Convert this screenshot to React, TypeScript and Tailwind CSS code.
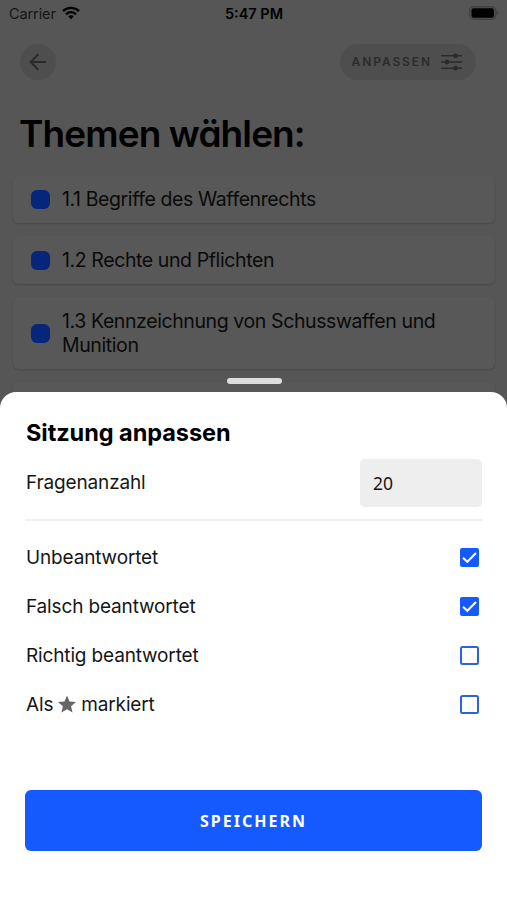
import { ReactNode } from 'react';

type TopicCardProps = {
  title: string;
};

type OptionRowProps = {
  label: ReactNode;
  checked?: boolean;
};

const StatusBar = () => (
  <div className="grid h-7 grid-cols-3 items-center pr-2 pl-[9px] text-[14.5px] text-[#151515]">
    <div className="flex items-center gap-[6px]">
      <span className="tracking-[-0.1px]">Carrier</span>
      <svg className="-mt-[2px]" width="18" height="14" viewBox="0 0 18 14" fill="none" stroke="#000" strokeWidth="2.4">
        <path d="M1 5.2C5.4 0.7 12.6 0.7 17 5.2" />
        <path d="M4 8.3C6.9 5.6 11.1 5.6 14 8.3" />
        <path d="M6.2 10.2C7.7 8.8 10.3 8.8 11.8 10.2L9 13.2Z" fill="#000" stroke="none" />
      </svg>
    </div>
    <span className="text-center font-semibold whitespace-nowrap text-black">5:47 PM</span>
    <svg className="-mt-[2px] justify-self-end" width="30" height="14" viewBox="0 0 30 14">
      <rect x="0.8" y="0.8" width="26" height="12.4" rx="4" fill="none" stroke="#404040" strokeWidth="1.4" />
      <rect x="2.5" y="2.2" width="22.5" height="9.6" rx="2" fill="#000" />
      <path d="M28.2 5v4c1.6-.6 1.6-3.4 0-4Z" fill="#404040" />
    </svg>
  </div>
);

const TopicCard = ({ title }: TopicCardProps) => (
  <div className="flex items-center gap-3 rounded-md bg-[#585858] px-[18px] py-[12px] shadow-[0_1px_2px_rgba(0,0,0,0.16)]">
    <span className="size-[19px] shrink-0 rounded-md bg-[#06267c]" />
    <span className="text-[19.5px] leading-6 tracking-[-0.4px] text-[#0a0a0a]">{title}</span>
  </div>
);

const Checkbox = ({ checked }: { checked?: boolean }) => (
  <svg width="19" height="19" viewBox="0 0 19 19" fill="none">
    {checked ? (
      <>
        <rect width="19" height="19" rx="2" fill="#145aff" />
        <path d="M3 9.7L7.3 13.8L16 5" stroke="#fff" strokeWidth="2" />
      </>
    ) : (
      <rect x="1" y="1" width="17" height="17" rx="1.5" stroke="#2b64e3" strokeWidth="2" />
    )}
  </svg>
);

const OptionRow = ({ label, checked }: OptionRowProps) => (
  <div className="flex h-[49px] items-center justify-between pr-[3px]">
    <span className="flex items-center pt-[2px] pl-px">{label}</span>
    <Checkbox checked={checked} />
  </div>
);

const Star = () => (
  <svg className="mx-[5px] -mt-[4px]" width="18" height="18" viewBox="2 2 20 19" fill="#666">
    <path d="M12 17.27 18.18 21l-1.64-7.03L22 9.24l-7.19-.61L12 2 9.19 8.63 2 9.24l5.46 4.73L5.82 21z" />
  </svg>
);

export default function App() {
  const topics = [
    '1.1 Begriffe des Waffenrechts',
    '1.2 Rechte und Pflichten',
    '1.3 Kennzeichnung von Schusswaffen und Munition',
    '1.4 Erlaubnisse',
  ];

  const options: OptionRowProps[] = [
    { label: 'Unbeantwortet', checked: true },
    { label: 'Falsch beantwortet', checked: true },
    { label: 'Richtig beantwortet' },
    {
      label: (
        <>
          Als
          <Star />
          markiert
        </>
      ),
    },
  ];

  return (
    <div className="relative h-[900px] w-[507px] overflow-hidden bg-[#565656] font-['Inter',sans-serif]">
      <StatusBar />
      <div className="flex items-center justify-between pt-4 pr-[31px] pl-5">
        <button className="flex size-9 items-center justify-center rounded-full bg-[#4e4e4e] pr-px">
          <svg width="18" height="18" viewBox="0 0 18 18" fill="none" stroke="#292929" strokeWidth="2">
            <path d="M17 9H2M9.3 1.3L1.6 9L9.3 16.7" />
          </svg>
        </button>
        <button className="flex h-9 items-center rounded-full bg-[#4e4e4e] pr-[14px] pl-3 text-[#2b2b2b]">
          <span className="text-[12px] font-semibold tracking-[1.9px]">ANPASSEN</span>
          <svg className="ml-[9px]" width="21" height="18" viewBox="0 0 21 18" fill="#2b2b2b" stroke="#2b2b2b" strokeWidth="1.4">
            <path d="M0 2.8H21M0 9H21M0 15.2H21" />
            <circle cx="14.5" cy="2.8" r="1.7" />
            <circle cx="6" cy="9" r="1.7" />
            <circle cx="14.5" cy="15.2" r="1.7" />
          </svg>
        </button>
      </div>
      <h1 className="mt-[29px] pl-[19px] text-[37px] leading-[50px] font-semibold tracking-[-0.9px] whitespace-nowrap text-black [font-feature-settings:'cv11']">
        Themen wählen:
      </h1>
      <div className="mt-4 flex flex-col gap-[13px] pr-3 pl-[13px]">
        {topics.map((topic) => (
          <TopicCard key={topic} title={topic} />
        ))}
      </div>

      <div className="absolute inset-x-0 bottom-0 h-[508px] rounded-t-[16px] bg-white px-[25px] text-[19px] tracking-[-0.15px] text-[#161616]">
        <span className="absolute -top-[14px] left-[227px] h-[6px] w-[55px] rounded-full bg-[#dedede]" />
        <h2 className="pt-[26px] pl-px text-[23.5px] leading-[30px] font-bold tracking-[-0.05px] text-black">
          Sitzung anpassen
        </h2>
        <div className="mt-[11px] flex items-center justify-between border-b-2 border-[#eee] pb-3">
          <span className="pt-px pl-px">Fragenanzahl</span>
          <span className="flex h-12 w-[122px] items-center rounded-[5px] bg-[#eee] pl-[13px] font-['Noto_Sans',sans-serif] text-[17.5px] tracking-normal">
            20
          </span>
        </div>
        <div className="mt-3">
          {options.map((option, index) => (
            <OptionRow key={index} {...option} />
          ))}
        </div>
        <button className="mt-[61px] h-[61px] w-full rounded-md bg-[#145aff] font-['Noto_Sans',sans-serif] text-[16px] font-bold tracking-[2px] text-white">
          SPEICHERN
        </button>
      </div>
    </div>
  );
}
